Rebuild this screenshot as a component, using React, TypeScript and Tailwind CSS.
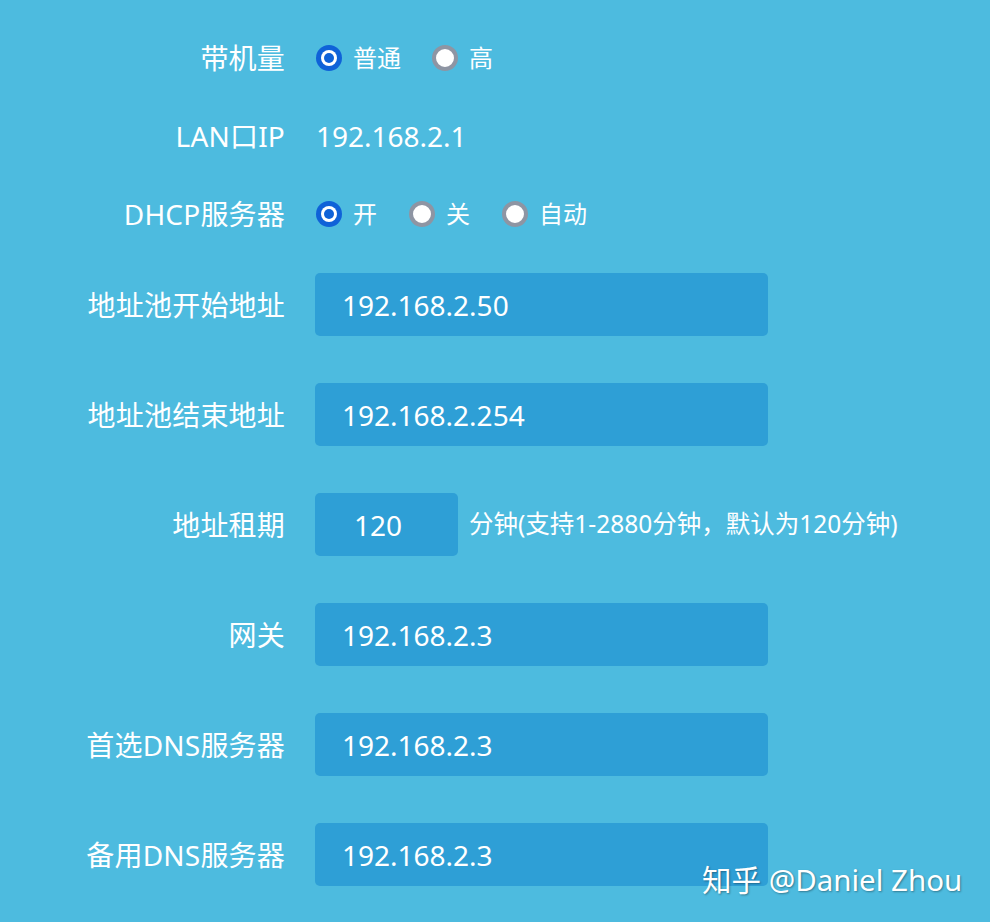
import type { ReactNode } from 'react';

const font = { fontFamily: '"Noto Sans", "Noto Sans CJK SC", sans-serif' };

function Radio({ checked, label }: { checked?: boolean; label: string }) {
  return (
    <div className="flex items-center gap-[11px]">
      {checked ? (
        <span className="w-[26px] h-[26px] rounded-full bg-[#0f62d8] flex items-center justify-center">
          <span className="w-[16px] h-[16px] rounded-full bg-white flex items-center justify-center">
            <span className="w-[10px] h-[10px] rounded-full bg-[#0f62d8]" />
          </span>
        </span>
      ) : (
        <span className="w-[26px] h-[26px] rounded-full bg-white border-[4px] border-[#8e95a3]" />
      )}
      <span className="text-[24px]">{label}</span>
    </div>
  );
}

function Row({ label, children, tall }: { label: string; children: ReactNode; tall?: boolean }) {
  return (
    <div className={`flex items-center ${tall ? 'h-[63px]' : 'h-[78px]'}`}>
      <div className="w-[285px] text-right shrink-0 tracking-[0.2px]">{label}</div>
      <div className="ml-[31px] flex items-center">{children}</div>
    </div>
  );
}

function Field({ value }: { value: string }) {
  return (
    <div className="w-[453px] h-[63px] -ml-px rounded-[5px] bg-[#2e9fd6] flex items-center pl-[27px]">
      {value}
    </div>
  );
}

export default function App() {
  const fields = [
    ['地址池开始地址', '192.168.2.50'],
    ['地址池结束地址', '192.168.2.254'],
  ];
  const tail = [
    ['网关', '192.168.2.3'],
    ['首选DNS服务器', '192.168.2.3'],
    ['备用DNS服务器', '192.168.2.3'],
  ];

  return (
    <div
      className="relative w-[990px] h-[922px] bg-[#4dbbdf] text-white text-[28px] leading-none pt-[19px] overflow-hidden"
      style={font}
    >
      <Row label="带机量">
        <div className="flex gap-[31px]">
          <Radio checked label="普通" />
          <Radio label="高" />
        </div>
      </Row>
      <Row label="LAN口IP">
        <span>192.168.2.1</span>
      </Row>
      <Row label="DHCP服务器">
        <div className="flex gap-[32px]">
          <Radio checked label="开" />
          <Radio label="关" />
          <Radio label="自动" />
        </div>
      </Row>

      <div className="mt-[20px] flex flex-col gap-[47px]">
        {fields.map(([l, v]) => (
          <Row key={l} label={l} tall>
            <Field value={v} />
          </Row>
        ))}
        <Row label="地址租期" tall>
          <div className="w-[143px] h-[63px] -ml-px rounded-[5px] bg-[#2e9fd6] flex items-center pl-[39px]">120</div>
          <span className="ml-[11px] text-[24.5px]">分钟(支持1-2880分钟，默认为120分钟)</span>
        </Row>
        {tail.map(([l, v]) => (
          <Row key={l} label={l} tall>
            <Field value={v} />
          </Row>
        ))}
      </div>

      <div className="absolute left-[702px] top-[865px] text-[29.5px] text-white [text-shadow:1px_1px_2px_rgba(0,0,0,0.35)]">
        知乎 @Daniel Zhou
      </div>
    </div>
  );
}
